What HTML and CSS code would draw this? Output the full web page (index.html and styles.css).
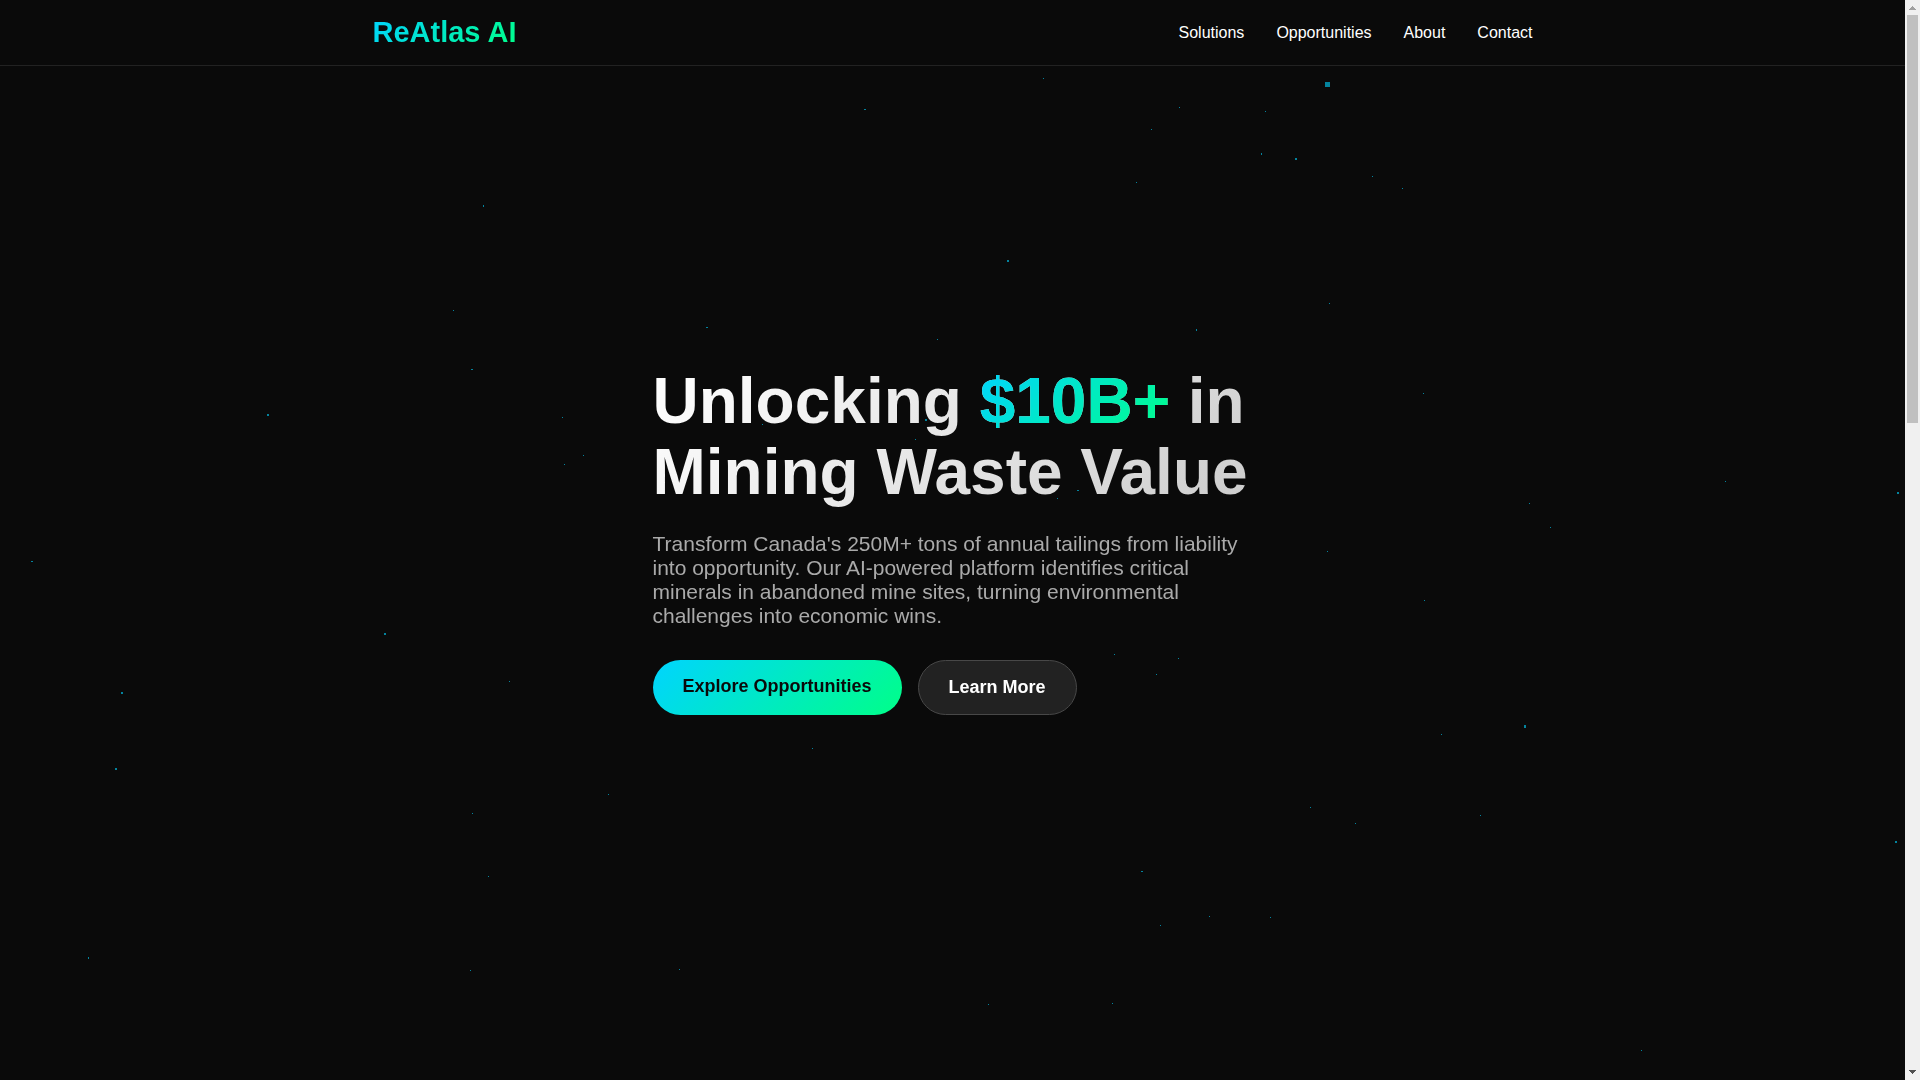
FILE: index.html
```
<!DOCTYPE html>
<html lang="en">
<head>
  <meta charset="UTF-8">
  <meta name="viewport" content="width=device-width, initial-scale=1.0">
  <title>ReAtlas AI</title>
  <link rel="stylesheet" href="styles.css">
</head>

<body>
  <!-- Floating particles -->
  <svg class="particles" id="particles" aria-hidden="true"></svg>

  <header>
    <div class="container">
      <nav>
        <a href="#" class="logo">ReAtlas AI</a>
        <ul class="nav-links">
          <li><a href="#solutions">Solutions</a></li>
          <li><a href="#opportunities">Opportunities</a></li>
          <li><a href="#about">About</a></li>
          <li><a href="#contact">Contact</a></li>
        </ul>
      </nav>
    </div>
  </header>

  <section class="hero">
    <div class="hero-content">
      <h1>Unlocking <span class="highlight">$10B+</span> in Mining Waste Value</h1>
      <p>Transform Canada's 250M+ tons of annual tailings from liability into opportunity. Our AI-powered platform identifies critical minerals in abandoned mine sites, turning environmental challenges into economic wins.</p>
      <div class="cta-buttons">
        <button type="button" class="btn btn-primary">Explore Opportunities</button>
        <button type="button" class="btn btn-secondary">Learn More</button>
      </div>
    </div>
  </section>

  <!-- Scrollbar -->
  <div class="scrollbar" aria-hidden="true">
    <svg class="arrow arrow-up" viewBox="0 0 7 4"><path d="M3 0h1v1h1v1h1v1h1v1H0V3h1V2h1V1h1z"/></svg>
    <div class="track"><div class="thumb"></div></div>
    <svg class="arrow arrow-down" viewBox="0 0 7 4"><path d="M0 0h7v1H6v1H5v1H4v1H3V3H2V2H1V1H0z"/></svg>
  </div>

  <script src="script.js"></script>
</body>
</html>
```

FILE: styles.css
```
* {
  margin: 0;
  padding: 0;
  box-sizing: border-box;
}

body {
  font-family: "Liberation Sans", Arial, sans-serif;
  background: #0a0a0a;
  color: #fff;
  padding-right: 15px;
}

.particles {
  position: fixed;
  top: 0;
  left: 0;
  width: 100%;
  height: 100%;
  fill: #00d4ff;
  opacity: 0.6;
  pointer-events: none;
}

.container {
  max-width: 1200px;
  margin: 0 auto;
  padding: 0 20px;
}

/* Header */
header {
  position: fixed;
  top: 0;
  left: 0;
  right: 15px;
  z-index: 10;
  background: #0a0a0a;
  border-bottom: 1px solid #222;
}

nav {
  display: flex;
  justify-content: space-between;
  align-items: center;
  padding: 16px 0;
}

.logo {
  font-size: 29px;
  font-weight: bold;
  line-height: 33px;
  text-decoration: none;
}

.logo,
.highlight {
  background: linear-gradient(135deg, #00d4ff, #00ff88);
  background-clip: text;
  -webkit-background-clip: text;
  color: transparent;
}

.nav-links {
  display: flex;
  gap: 32px;
  list-style: none;
}

.nav-links a {
  color: #fff;
  text-decoration: none;
}

/* Hero */
.hero {
  position: relative;
  display: flex;
  justify-content: center;
  align-items: center;
  min-height: 100vh;
}

.hero-content {
  max-width: 600px;
}

.hero h1 {
  font-size: 64px;
  line-height: 71px;
  margin-bottom: 24px;
  background: linear-gradient(135deg, #fff, #ccc);
  background-clip: text;
  -webkit-background-clip: text;
  color: transparent;
}

.hero p {
  font-size: 21px;
  line-height: 24px;
  color: #aaa;
  margin-bottom: 32px;
}

.cta-buttons {
  display: flex;
  gap: 16px;
}

.btn {
  font-family: inherit;
  font-size: 18px;
  font-weight: bold;
  line-height: 21px;
  padding: 16px 30px 18px;
  border: none;
  border-radius: 50px;
  cursor: pointer;
}

.btn-primary {
  background: linear-gradient(135deg, #00d4ff, #00ff88);
  color: #0a0a0a;
}

.btn-secondary {
  padding: 16px 30px;
  background: #222;
  color: #fff;
  border: 1px solid #484848;
}

/* Scrollbar */
.scrollbar {
  position: fixed;
  top: 0;
  right: 0;
  bottom: 0;
  z-index: 20;
  width: 15px;
  padding: 6px 2px;
  display: flex;
  flex-direction: column;
  align-items: center;
  background: #f0f0f0;
}

.arrow {
  width: 7px;
  height: 4px;
}

.arrow-up {
  fill: #a0a0a0;
}

.arrow-down {
  fill: #505050;
}

.track {
  flex: 1;
  width: 11px;
  margin: 5px 0;
}

.thumb {
  height: 38.9%;
  background: #c0c0c0;
}
```

FILE: script.js
```
// x, y, width, height (size defaults to 1x1)
const particles = [
  [1325, 82, 5, 5], [1043, 78], [1179, 107], [1151, 129], [1265, 111],
  [1261, 153, 1, 2], [1295, 158, 2, 2], [1136, 182], [1372, 176], [1402, 188],
  [1329, 303], [1196, 329, 1, 2], [864, 109, 2, 1], [1007, 260, 2, 2], [937, 339],
  [483, 205, 1, 2], [453, 310], [471, 369, 2, 1], [562, 417], [583, 455],
  [564, 464], [706, 327, 2, 1], [267, 414, 2, 2], [31, 561, 2, 1], [384, 633, 2, 2],
  [762, 424], [925, 419, 2, 2], [915, 439], [1077, 490, 2, 1], [1057, 498],
  [1423, 393], [1725, 481], [1897, 492, 2, 2], [1529, 503], [1550, 527],
  [1327, 551], [1424, 600], [1114, 654], [1178, 658], [1156, 674],
  [509, 681], [121, 692, 2, 2], [115, 768, 2, 2], [812, 748], [608, 794],
  [472, 813], [488, 876], [1524, 725, 2, 3], [1441, 734], [1310, 807],
  [1355, 823], [1480, 815], [1895, 841, 2, 2], [1141, 871, 2, 1], [1160, 925],
  [1209, 916], [1270, 917], [88, 957, 1, 2], [470, 970], [679, 969],
  [988, 1004], [1112, 1003], [1641, 1050]
];

const svg = document.getElementById("particles");

particles.forEach(([x, y, width = 1, height = 1]) => {
  const rect = document.createElementNS("http://www.w3.org/2000/svg", "rect");
  rect.setAttribute("x", x);
  rect.setAttribute("y", y);
  rect.setAttribute("width", width);
  rect.setAttribute("height", height);
  svg.appendChild(rect);
});
```
